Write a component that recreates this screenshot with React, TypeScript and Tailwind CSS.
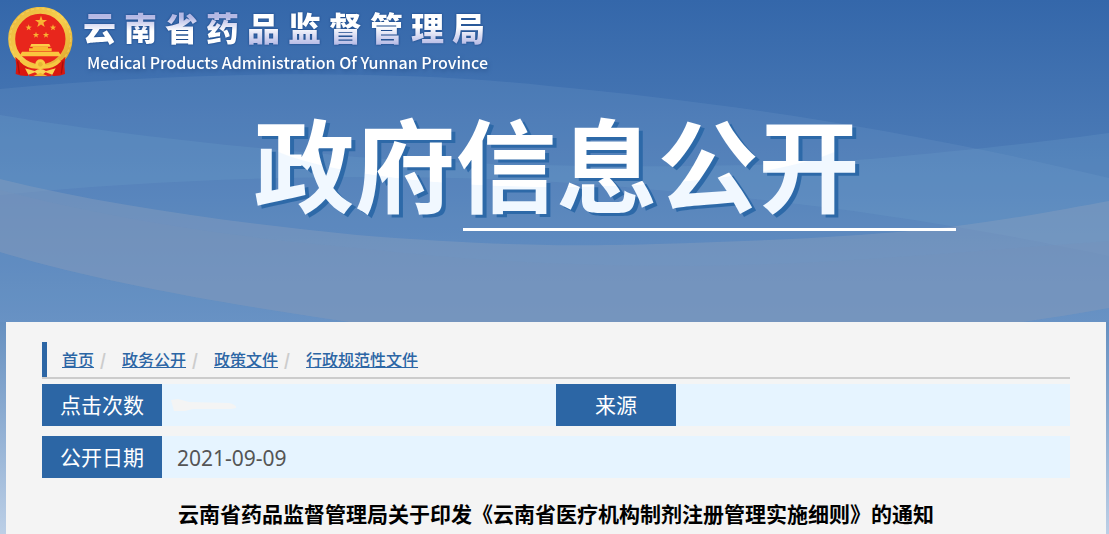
import { Fragment } from 'react';

const breadcrumbs = ['首页', '政务公开', '政策文件', '行政规范性文件'];

const siteName = '云南省药品监督管理局'.split('');

function Star({ x, y, r }: { x: number; y: number; r: number }) {
  const points = Array.from({ length: 10 }, (_, i) => {
    const radius = i % 2 === 0 ? r : r * 0.4;
    const angle = (Math.PI / 5) * i - Math.PI / 2;
    return `${x + radius * Math.cos(angle)},${y + radius * Math.sin(angle)}`;
  }).join(' ');
  return <polygon points={points} fill="#f9b233" />;
}

function Emblem() {
  return (
    <svg viewBox="0 0 195 210" className="h-[70px] w-[65px] shrink-0" aria-hidden="true">
      <defs>
        <linearGradient id="gold" x1="0" y1="0" x2="1" y2="1">
          <stop offset="0" stopColor="#e9b73c" />
          <stop offset="0.5" stopColor="#f7cf4d" />
          <stop offset="1" stopColor="#dfa52b" />
        </linearGradient>
      </defs>
      <circle cx="97" cy="96" r="86" fill="#e8261c" stroke="url(#gold)" strokeWidth="21" />
      <circle cx="97" cy="96" r="91" fill="none" stroke="#fbe07a" strokeWidth="4" strokeDasharray="9 7" opacity="0.4" />
      <Star x={99} y={45} r={19} />
      <Star x={62} y={62} r={10} />
      <Star x={135} y={62} r={10} />
      <Star x={84} y={84} r={10} />
      <Star x={114} y={84} r={10} />
      {/* gate tower */}
      <path d="M70 111h54l4 8h-62z" fill="#fdcc48" />
      <path d="M74 119h46v5h11v9h-68v-9h11z" fill="#f9b92f" />
      <path d="M42 134h110l8 14h-126z" fill="#fbc53e" />
      {/* drapes and cog */}
      <path d="M22 149Q42 171 74 179L60 207Q38 208 23 201Q27 176 22 149z" fill="#d9170f" />
      <path d="M172 149Q152 171 120 179L134 207Q156 208 171 201Q167 176 172 149z" fill="#d9170f" />
      <path d="M58 178h78l-6 30h-66z" fill="#e5231a" />
      <path d="M29 163l5 37M165 163l-5 37" stroke="#a90e0b" strokeWidth="4" />
      <path d="M39 160Q62 184 97 179Q132 184 155 160" fill="none" stroke="#f6c741" strokeWidth="11" />
      <circle cx="97" cy="172" r="15" fill="#f8cb42" />
      <circle cx="97" cy="172" r="7" fill="#e8b535" />
      <path d="M51 184l29 8q17-12 34 0l29-8-10 19-20-7q-16 15-32 0l-20 7z" fill="#fbd350" />
      <path d="M76 207l21-10 21 10z" fill="#f2b72f" />
    </svg>
  );
}

function HeaderWaves() {
  return (
    <svg
      viewBox="0 0 1109 322"
      preserveAspectRatio="none"
      className="absolute inset-0 h-full w-full"
      aria-hidden="true"
    >
      <path d="M0 89C200 70 400 70 549 86C720 102 900 128 1109 178V322H0z" fill="#7aa0cf" opacity="0.2" />
      <path
        d="M0 115C130 136 230 146 357 157C540 170 760 168 870 159C970 150 1050 141 1109 133V256C940 220 780 199 656 190C480 172 230 172 0 195z"
        fill="#70a4cf"
        opacity="0.22"
      />
      <path
        d="M0 179C110 206 230 222 357 235C500 247 600 246 656 244C760 241 860 237 949 227C1020 218 1070 208 1109 201V308C1080 313 1050 318 1022 322H350C220 303 100 282 0 252z"
        fill="#8ba0bd"
        opacity="0.4"
      />
      <path
        d="M0 190C140 226 260 239 357 248C500 264 600 266 692 266C850 264 980 250 1109 241V308C1080 313 1050 318 1022 322H350C220 303 100 282 0 252z"
        fill="#7593bb"
        opacity="0.35"
      />
    </svg>
  );
}

function SiteHeader() {
  return (
    <header className="relative h-[322px] bg-linear-to-b from-[#3467aa] to-[#648fc2]">
      <HeaderWaves />
      <div className="relative flex gap-[10px] pt-[7px] pl-2">
        <Emblem />
        <div>
          <div className="flex gap-2 text-[33px] leading-[40px] font-black drop-shadow-[0_0_1px_#143f80]">
            {siteName.map((char, i) => (
              <span
                key={i}
                className={
                  i < 4
                    ? 'bg-linear-to-b from-[#b4b8e4] from-25% to-white to-60% bg-clip-text text-transparent'
                    : 'bg-linear-to-b from-white from-50% to-[#b4b8e4] to-95% bg-clip-text text-transparent'
                }
              >
                {char}
              </span>
            ))}
          </div>
          <p className="pl-1 text-[16px] leading-[30px] font-medium text-white drop-shadow-[1px_2px_2px_#2a5591]">
            Medical Products Administration Of Yunnan Province
          </p>
        </div>
      </div>
      <div className="relative mx-auto mt-[22px] w-fit pl-1">
        <h1 className="bg-[radial-gradient(ellipse_310px_62px_at_50%_21%,#fff_99%,#f1f8ff_100%)] bg-clip-text text-[101px] leading-[125px] font-bold text-transparent drop-shadow-[4px_3px_0_#2d69a8]">
          政府信息公开
        </h1>
        <div className="mt-1 -mr-24 ml-[210px] h-[3px] bg-white" />
      </div>
    </header>
  );
}

function Breadcrumb() {
  return (
    <nav className="border-b-2 border-[#ccc]">
      <ol className="flex border-l-5 border-[#2c66a5] pl-[15px] text-[16px] leading-[35px] font-medium">
        {breadcrumbs.map((label, i) => (
          <Fragment key={label}>
            {i > 0 && <li className="w-7 pl-[6px] font-black text-[#ccc]">/</li>}
            <li>
              <a href="#" className="text-[#2c66a5] underline">
                {label}
              </a>
            </li>
          </Fragment>
        ))}
      </ol>
    </nav>
  );
}

const labelCell = 'w-[120px] border-b-10 border-[#f4f4f4] bg-[#2c66a5] pb-[2px] text-center font-normal text-white';
const valueCell = 'border-b-10 border-[#f4f4f4] bg-[#e6f4ff] px-[9px] text-[#555]';

function DocumentInfo() {
  return (
    <table className="mt-[5px] w-full table-fixed text-[21px] leading-[40px]">
      <tbody>
        <tr>
          <th scope="row" className={labelCell}>点击次数</th>
          <td className={valueCell}>
            <svg viewBox="0 0 66 13" className="h-[13px] w-[66px]" aria-hidden="true">
              <path d="M0 1L7 0L18 3L58 4Q66 6 65 9L60 10L22 10L14 12L3 12z" fill="#f4f4f4" />
            </svg>
          </td>
          <th scope="row" className={labelCell}>来源</th>
          <td className={valueCell} />
        </tr>
        <tr>
          <th scope="row" className={labelCell}>公开日期</th>
          <td colSpan={3} className={valueCell}>
            <span className="pl-[6px] font-['Noto_Sans']">2021-09-09</span>
          </td>
        </tr>
      </tbody>
    </table>
  );
}

export default function App() {
  return (
    <div className="flex min-h-screen flex-col bg-[#bccfe6] font-['Noto_Sans_CJK_SC',sans-serif]">
      <SiteHeader />
      <div className="flex grow flex-col bg-linear-to-b from-[#6690c0] to-[#bccfe6] pr-[3px] pl-[6px]">
        <main className="grow bg-[#f4f4f4] px-9 pt-5">
          <Breadcrumb />
          <DocumentInfo />
          <h2 className="mt-[9px] text-center text-[21px] leading-[32px] font-bold text-black">
            云南省药品监督管理局关于印发《云南省医疗机构制剂注册管理实施细则》的通知
          </h2>
        </main>
      </div>
    </div>
  );
}
